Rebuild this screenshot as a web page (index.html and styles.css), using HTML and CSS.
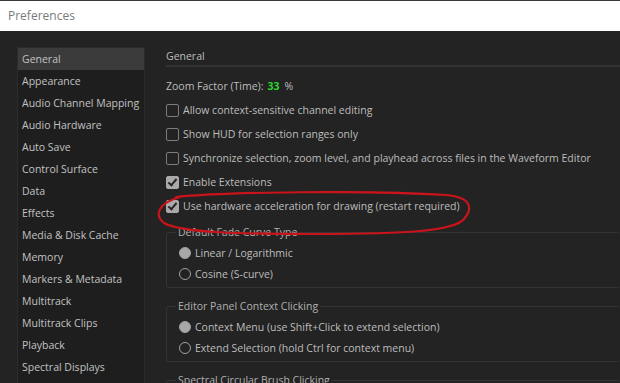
FILE: index.html
```html
<!DOCTYPE html>
<html lang="en">

<head>
    <meta charset="UTF-8">
    <title>Preferences</title>
    <link rel="stylesheet" href="styles.css">
</head>

<body>
    <div class="titlebar">Preferences</div>

    <div class="window">
        <ul class="categories">
            <li class="active">General</li>
            <li>Appearance</li>
            <li>Audio Channel Mapping</li>
            <li>Audio Hardware</li>
            <li>Auto Save</li>
            <li>Control Surface</li>
            <li>Data</li>
            <li>Effects</li>
            <li>Media &amp; Disk Cache</li>
            <li>Memory</li>
            <li>Markers &amp; Metadata</li>
            <li>Multitrack</li>
            <li>Multitrack Clips</li>
            <li>Playback</li>
            <li>Spectral Displays</li>
        </ul>

        <div class="panel">
            <div class="panel-title">General</div>

            <div class="row zoom">Zoom Factor (Time): <span class="value">33</span> %</div>

            <div class="row"><span class="check"></span>Allow context-sensitive channel editing</div>
            <div class="row"><span class="check"></span>Show HUD for selection ranges only</div>
            <div class="row"><span class="check"></span>Synchronize selection, zoom level, and playhead across files in the Waveform Editor</div>
            <div class="row"><span class="check on"></span>Enable Extensions</div>
            <div class="row marked">
                <span class="check on"></span>Use hardware acceleration for drawing (restart required)
                <!-- red marker circle drawn over the screenshot -->
                <svg class="scribble" width="320" height="48" viewBox="0 0 320 48">
                    <path d="M20 6 C70 1 210 -1 290 4 C314 6 318 16 308 28 C298 40 250 43 160 43 C90 43 25 42 8 32 C-2 24 2 12 24 6"
                        fill="none" stroke="#c8141a" stroke-width="2.2" stroke-linecap="round" />
                </svg>
            </div>

            <fieldset class="group">
                <legend>Default Fade Curve Type</legend>
                <div class="row radio-row"><span class="radio on"></span>Linear / Logarithmic</div>
                <div class="row radio-row"><span class="radio"></span>Cosine (S-curve)</div>
            </fieldset>

            <fieldset class="group">
                <legend>Editor Panel Context Clicking</legend>
                <div class="row radio-row"><span class="radio on"></span>Context Menu (use Shift+Click to extend selection)</div>
                <div class="row radio-row"><span class="radio"></span>Extend Selection (hold Ctrl for context menu)</div>
            </fieldset>

            <fieldset class="group">
                <legend>Spectral Circular Brush Clicking</legend>
                <div class="row radio-row"><span class="radio on"></span>Paint</div>
            </fieldset>
        </div>
    </div>
</body>

</html>
```

FILE: styles.css
```css
body {
    margin: 0;
    height: 383px;
    overflow: hidden;
    background-color: #232323;
    font-family: "Open Sans", "Noto Sans", sans-serif;
    font-size: 10.5px;
    color: #bdbdbd;
}

.titlebar {
    height: 30px;
    line-height: 30px;
    border-top: 1px solid #3a3a3a;
    background-color: #ffffff;
    color: #7a7a7a;
    font-size: 12px;
    padding-left: 8px;
}

.window {
    display: flex;
    gap: 21px;
    padding: 16px 0 0 17px;
}

.categories {
    list-style: none;
    margin: 0;
    padding: 0;
    width: 126px;
    flex-shrink: 0;
    height: 400px;
    background-color: #1e1e1e;
    border: 1px solid #2c2c2c;
    border-bottom: none;
}

.categories li {
    height: 22px;
    line-height: 22px;
    padding-left: 4px;
    white-space: nowrap;
    color: #c2c2c2;
}

.categories li.active {
    background-color: #3b3b3b;
}

.panel {
    flex: 1;
    min-width: 0;
    white-space: nowrap;
}

.panel-title {
    height: 18px;
    line-height: 18px;
    border-bottom: 2px solid #333333;
    margin-bottom: 7px;
}

.row {
    height: 24px;
    display: flex;
    align-items: center;
}

.zoom .value {
    color: #2bd32b;
    font-weight: bold;
    margin: 0 5px 0 4px;
}

.check {
    width: 11px;
    height: 11px;
    border: 1px solid #7c7c7c;
    border-radius: 2px;
    margin-right: 4px;
    flex-shrink: 0;
    position: relative;
}

.check.on {
    background-color: #a9a9a9;
    border-color: #a9a9a9;
}

.check.on::after {
    content: "";
    position: absolute;
    left: 3px;
    top: 0px;
    width: 3px;
    height: 7px;
    border: solid #262626;
    border-width: 0 2px 2px 0;
    transform: rotate(40deg);
}

.marked {
    position: relative;
}

.scribble {
    position: absolute;
    left: -10px;
    top: -3px;
}

.group {
    margin: 7px 0 11px 0;
    padding: 3px 0 3px 12px;
    border: 1px solid #333333;
    border-right: none;
    border-radius: 3px;
}

.group legend {
    padding: 0 2px;
    margin-left: -3px;
    color: #b0b0b0;
}

.radio-row {
    height: 21px;
}

.radio {
    width: 10px;
    height: 10px;
    border: 1.5px solid #a0a0a0;
    border-radius: 50%;
    margin-right: 4px;
    flex-shrink: 0;
}

.radio.on {
    background-color: #a8a8a8;
}
```
